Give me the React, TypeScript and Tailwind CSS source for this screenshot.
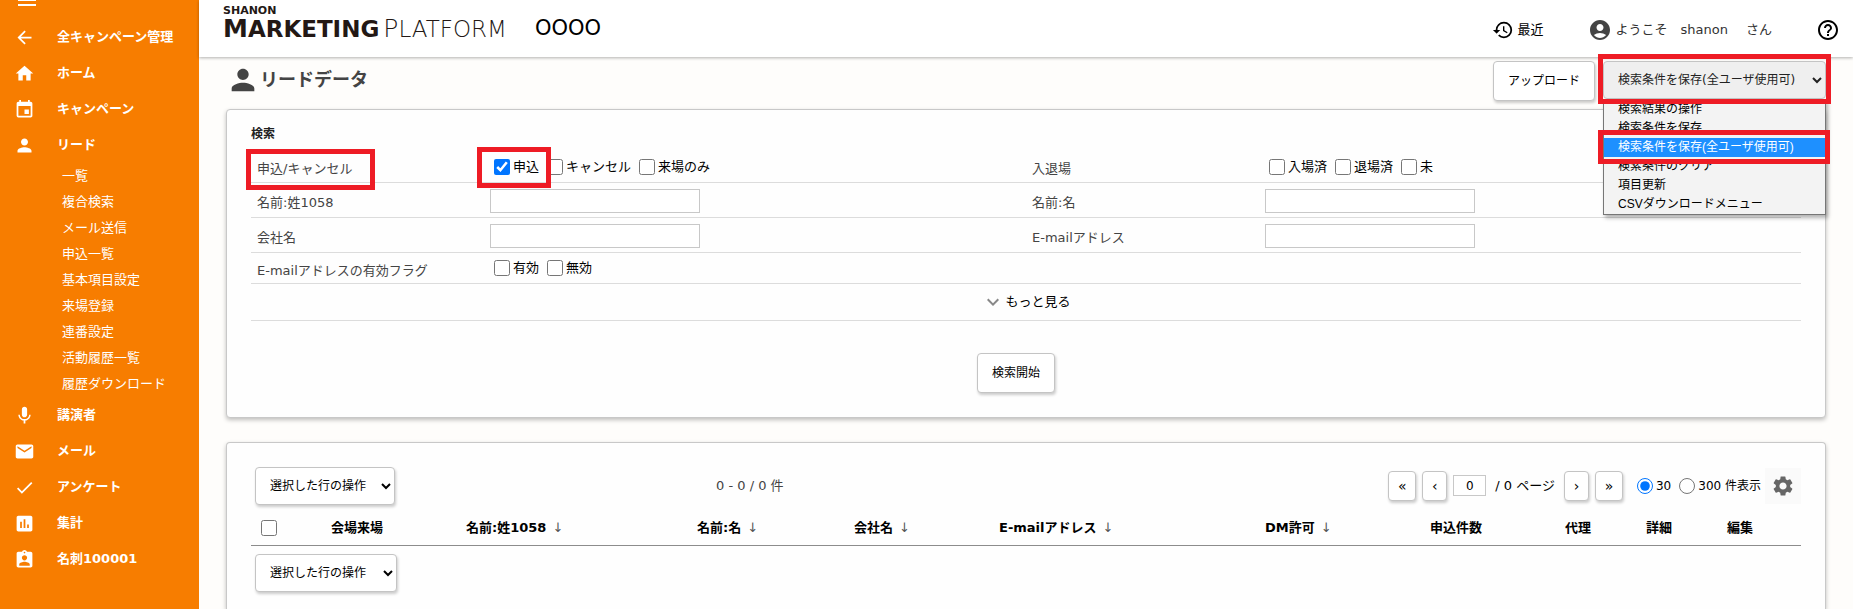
import { useState } from 'react';
import type { ReactNode } from 'react';
import type { IconType } from 'react-icons';
import {
  MdAccountCircle,
  MdArrowBack,
  MdAssessment,
  MdAssignmentInd,
  MdCheck,
  MdEvent,
  MdExpandMore,
  MdHelpOutline,
  MdHistory,
  MdHome,
  MdMail,
  MdMenu,
  MdMic,
  MdPerson,
  MdSettings,
} from 'react-icons/md';

interface NavItem {
  label: string;
  icon: IconType;
  children?: string[];
}

const navItems: NavItem[] = [
  { label: '全キャンペーン管理', icon: MdArrowBack },
  { label: 'ホーム', icon: MdHome },
  { label: 'キャンペーン', icon: MdEvent },
  {
    label: 'リード',
    icon: MdPerson,
    children: [
      '一覧',
      '複合検索',
      'メール送信',
      '申込一覧',
      '基本項目設定',
      '来場登録',
      '連番設定',
      '活動履歴一覧',
      '履歴ダウンロード',
    ],
  },
  { label: '講演者', icon: MdMic },
  { label: 'メール', icon: MdMail },
  { label: 'アンケート', icon: MdCheck },
  { label: '集計', icon: MdAssessment },
  { label: '名刺100001', icon: MdAssignmentInd },
];

const searchActions = [
  '検索結果の操作',
  '検索条件を保存',
  '検索条件を保存(全ユーザ使用可)',
  '検索条件のクリア',
  '項目更新',
  'CSVダウンロードメニュー',
];

const columns = [
  { label: '会場来場', sortable: false, width: 'w-[135px]' },
  { label: '名前:姓1058', sortable: true, width: 'w-[231px]' },
  { label: '名前:名', sortable: true, width: 'w-[157px]' },
  { label: '会社名', sortable: true, width: 'w-[145px]' },
  { label: 'E-mailアドレス', sortable: true, width: 'w-[266px]' },
  { label: 'DM許可', sortable: true, width: 'w-[165px]' },
  { label: '申込件数', sortable: false, width: 'w-[135px]' },
  { label: '代理', sortable: false, width: 'w-[81px]' },
  { label: '詳細', sortable: false, width: 'w-[81px]' },
  { label: '編集', sortable: false, width: 'w-[74px]' },
];

const buttonClass =
  'rounded border border-[#c4c4c4] bg-white text-black shadow-[1px_2px_3px_rgba(0,0,0,0.2)]';

const rowLabelClass = 'pt-1.5 pl-1.5 text-left font-normal';

// red frame laid over the control it points at
function Marker({ className }: { className: string }) {
  return (
    <span
      aria-hidden="true"
      className={`pointer-events-none absolute z-20 border-5 border-[#ee1c25] ${className}`}
    />
  );
}

function Sidebar() {
  return (
    <nav className="w-[199px] shrink-0 overflow-hidden bg-[#f77d00] text-white">
      <button type="button" aria-label="メニュー" className="-mt-3 ml-[15px] block">
        <MdMenu size={24} />
      </button>
      <ul className="pt-[7px]">
        {navItems.map(({ label, icon: Icon, children }) => (
          <li key={label}>
            <a href="#" className="flex h-9 items-center gap-[22px] pl-[14px] font-bold">
              <Icon size={21} />
              {label}
            </a>
            {children && (
              <ul>
                {children.map((child) => (
                  <li key={child}>
                    <a href="#" className="block h-[26px] pl-[62px] leading-[26px]">
                      {child}
                    </a>
                  </li>
                ))}
              </ul>
            )}
          </li>
        ))}
      </ul>
    </nav>
  );
}

function Header() {
  return (
    <header className="z-10 flex h-[57px] items-start justify-between bg-white pr-[13px] pl-6 shadow-[0_1px_3px_rgba(0,0,0,0.3)]">
      <div className="flex gap-7">
        <div className="pt-1 text-[#231815]">
          <div className="pt-px text-[11px] leading-3 font-bold">SHANON</div>
          <div className="text-[23px] leading-6 whitespace-nowrap">
            <span className="font-bold">
              <span className="text-[25px] leading-6">M</span>ARKETING
            </span>
            <span className="ml-1 font-['DejaVu_Sans_Light','DejaVu_Sans',sans-serif] font-extralight">
              <span className="text-[25px] leading-6">P</span>LATFORM
            </span>
          </div>
        </div>
        <div className="pt-4 text-[21px] leading-6 text-black">OOOO</div>
      </div>
      <div className="flex items-center pt-[18px] leading-6 text-[#333]">
        <a href="#" className="mr-[44px] flex items-center gap-1 text-black">
          <MdHistory size={22} />
          最近
        </a>
        <MdAccountCircle size={24} className="mr-1 text-[#444]" />
        <span className="mr-[13px]">ようこそ</span>
        <span className="mr-[18px]">shanon</span>
        <span className="mr-[44px]">さん</span>
        <a href="#" aria-label="ヘルプ" className="text-black">
          <MdHelpOutline size={24} />
        </a>
      </div>
    </header>
  );
}

function CheckGroup({ items, checked }: { items: string[]; checked?: string }) {
  return (
    <div className="flex gap-2 pl-1">
      {items.map((item) => (
        <label key={item} className="flex items-center gap-[3px] text-black">
          <input type="checkbox" defaultChecked={item === checked} className="size-4" />
          {item}
        </label>
      ))}
    </div>
  );
}

function TextField({ label }: { label: string }) {
  return (
    <input
      type="text"
      aria-label={label}
      className="block h-6 w-[210px] border border-[#c8c8c8] bg-white px-1"
    />
  );
}

function SearchRow({ height, children }: { height: string; children: ReactNode }) {
  return <tr className={`border-b border-[#dcdcdc] ${height}`}>{children}</tr>;
}

function SearchPanel() {
  return (
    <section className="rounded border border-[#c8c8c8] bg-[#fefefe] px-6 pb-6 shadow-[0_2px_4px_rgba(0,0,0,0.25)]">
      <h2 className="pt-4 pb-2 text-xs leading-[17px] font-bold text-[#222]">検索</h2>
      <table className="w-full table-fixed border-collapse">
        <colgroup>
          <col className="w-[239px]" />
          <col />
          <col className="w-[239px]" />
          <col />
        </colgroup>
        <tbody>
          <SearchRow height="h-[31px]">
            <th scope="row" className={`relative ${rowLabelClass}`}>
              申込/キャンセル
              <Marker className="-top-0.5 -left-[5px] h-[41px] w-[129px]" />
            </th>
            <td className="relative pt-0.5">
              <CheckGroup items={['申込', 'キャンセル', '来場のみ']} checked="申込" />
              <Marker className="-top-1 -left-[13px] h-[41px] w-[74px]" />
            </td>
            <th scope="row" className={rowLabelClass}>入退場</th>
            <td className="pt-0.5">
              <CheckGroup items={['入場済', '退場済', '未']} />
            </td>
          </SearchRow>
          <SearchRow height="h-[35px]">
            <th scope="row" className={rowLabelClass}>名前:姓1058</th>
            <td className="pt-0.5">
              <TextField label="名前:姓1058" />
            </td>
            <th scope="row" className={rowLabelClass}>名前:名</th>
            <td className="pt-0.5">
              <TextField label="名前:名" />
            </td>
          </SearchRow>
          <SearchRow height="h-[35px]">
            <th scope="row" className={rowLabelClass}>会社名</th>
            <td className="pt-0.5">
              <TextField label="会社名" />
            </td>
            <th scope="row" className={rowLabelClass}>E-mailアドレス</th>
            <td className="pt-0.5">
              <TextField label="E-mailアドレス" />
            </td>
          </SearchRow>
          <SearchRow height="h-[31px]">
            <th scope="row" className={rowLabelClass}>E-mailアドレスの有効フラグ</th>
            <td colSpan={3}>
              <CheckGroup items={['有効', '無効']} />
            </td>
          </SearchRow>
          <SearchRow height="h-[37px]">
            <td colSpan={4}>
              <button type="button" className="mx-auto flex items-center text-black">
                <MdExpandMore size={24} className="text-[#888]" />
                もっと見る
              </button>
            </td>
          </SearchRow>
        </tbody>
      </table>
      <div className="mt-8 flex justify-center pr-5">
        <button type="button" className={`h-10 px-3.5 text-xs ${buttonClass}`}>
          検索開始
        </button>
      </div>
    </section>
  );
}

function RowActionSelect({ width }: { width: string }) {
  return (
    <select
      aria-label="選択した行の操作"
      className={`block h-[38px] pl-2.5 text-xs ${width} ${buttonClass}`}
    >
      <option>選択した行の操作</option>
    </select>
  );
}

function Pager() {
  const [perPage, setPerPage] = useState('30');

  return (
    <div className="flex items-center text-black">
      <button type="button" className={`mr-1.5 h-[30px] w-7 text-sm ${buttonClass}`}>«</button>
      <button type="button" className={`mr-1.5 h-[30px] w-[25px] text-sm ${buttonClass}`}>‹</button>
      <input
        type="text"
        aria-label="ページ"
        defaultValue="0"
        className="mr-[9px] h-[21px] w-[33px] border border-[#c8c8c8] bg-white text-center text-xs"
      />
      <span className="mr-[9px]">/ 0 ページ</span>
      <button type="button" className={`mr-1.5 h-[30px] w-[25px] text-sm ${buttonClass}`}>›</button>
      <button type="button" className={`mr-3.5 h-[30px] w-7 text-sm ${buttonClass}`}>»</button>
      <label className="mr-2 flex items-center gap-[3px] text-xs">
        <input
          type="radio"
          name="perPage"
          className="size-4"
          checked={perPage === '30'}
          onChange={() => setPerPage('30')}
        />
        30
      </label>
      <label className="mr-1 flex items-center gap-[3px] text-xs">
        <input
          type="radio"
          name="perPage"
          className="size-4"
          checked={perPage === '300'}
          onChange={() => setPerPage('300')}
        />
        300 件表示
      </label>
      <button
        type="button"
        aria-label="設定"
        className="flex size-9 items-center justify-center bg-[#fafafa] text-[#666]"
      >
        <MdSettings size={24} />
      </button>
    </div>
  );
}

function ResultPanel() {
  return (
    <section className="mt-6 grow rounded-t border border-b-0 border-[#c8c8c8] bg-[#fefefe] px-6 pt-6 shadow-[0_2px_4px_rgba(0,0,0,0.25)]">
      <div className="flex items-center">
        <div className="w-[30%] pl-1">
          <RowActionSelect width="w-[140px]" />
        </div>
        <span>0 - 0 / 0 件</span>
        <div className="ml-auto">
          <Pager />
        </div>
      </div>
      <table className="mt-1.5 w-full table-fixed border-collapse text-black">
        <thead>
          <tr className="h-[35px] border-b border-[#8c8c8c]">
            <th className="w-20 pl-2.5 text-left">
              <input type="checkbox" aria-label="すべて選択" className="block size-4" />
            </th>
            {columns.map((column) => (
              <th
                key={column.label}
                scope="col"
                className={`text-left font-bold whitespace-nowrap ${column.width}`}
              >
                {column.label}
                {column.sortable && (
                  <a href="#" className="ml-1.5 font-normal text-[#555]">
                    ↓
                  </a>
                )}
              </th>
            ))}
          </tr>
        </thead>
      </table>
      <div className="mt-2 pl-1">
        <RowActionSelect width="w-[142px]" />
      </div>
    </section>
  );
}

function SearchActionMenu() {
  const [selected, setSelected] = useState(searchActions[2]);

  return (
    <div className="relative">
      <select
        aria-label="検索結果の操作"
        value={selected}
        onChange={(e) => setSelected(e.target.value)}
        className="block h-[38px] w-[223px] rounded border border-[#c4c4c4] bg-[#efefef] pl-2.5 text-xs text-[#222]"
      >
        {searchActions.map((action) => (
          <option key={action}>{action}</option>
        ))}
      </select>
      <Marker className="-top-[7px] -left-[5px] h-[50px] w-[233px]" />
      <ul className="absolute top-[38px] left-0 z-10 w-[223px] border border-[#767676] bg-[#f3f3f3] font-['Liberation_Sans','Noto_Sans_CJK_JP',sans-serif] text-xs text-black shadow-[2px_3px_4px_rgba(0,0,0,0.3)]">
        {searchActions.map((action) => (
          <li
            key={action}
            className={`h-[19px] pl-3.5 leading-[19px] ${
              action === selected ? 'bg-[#1e90ff] text-white' : ''
            }`}
          >
            {action}
          </li>
        ))}
      </ul>
      <Marker className="top-[69px] -left-[5px] h-[34px] w-[232px]" />
    </div>
  );
}

export default function App() {
  return (
    <div className="flex min-h-screen bg-[#fefdfb] font-['DejaVu_Sans','Noto_Sans_CJK_JP',sans-serif] text-[13px] leading-5 text-[#444]">
      <Sidebar />
      <div className="flex min-w-0 grow flex-col">
        <Header />
        <main className="flex grow flex-col px-[27px] pt-1">
          <div className="flex h-12 items-start">
            <h1 className="flex items-center text-lg leading-[38px] font-bold">
              <MdPerson size={34} />
              リードデータ
            </h1>
            <button type="button" className={`mr-2 ml-auto h-10 px-3.5 text-xs ${buttonClass}`}>
              アップロード
            </button>
            <SearchActionMenu />
          </div>
          <SearchPanel />
          <ResultPanel />
        </main>
      </div>
    </div>
  );
}
